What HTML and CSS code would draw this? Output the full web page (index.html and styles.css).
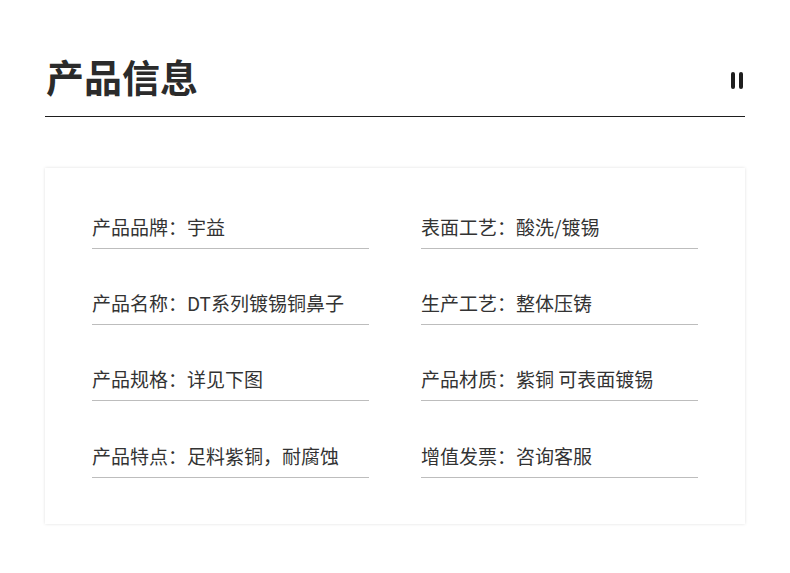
FILE: index.html
```html
<!DOCTYPE html>
<html lang="zh">
<head>
<meta charset="utf-8">
<link rel="stylesheet" href="styles.css">
</head>
<body>
<div class="page">
  <header class="head">
    <h1 class="title">产品信息</h1>
    <div class="bars"><span class="bar"></span><span class="bar"></span></div>
  </header>
  <section class="card">
    <div class="item">产品品牌：宇益</div>
    <div class="item">表面工艺：酸洗/镀锡</div>
    <div class="item">产品名称：DT系列镀锡铜鼻子</div>
    <div class="item">生产工艺：整体压铸</div>
    <div class="item">产品规格：详见下图</div>
    <div class="item">产品材质：紫铜 可表面镀锡</div>
    <div class="item">产品特点：足料紫铜，耐腐蚀</div>
    <div class="item">增值发票：咨询客服</div>
  </section>
</div>
</body>
</html>
```

FILE: styles.css
```css
html, body {
  margin: 0;
  padding: 0;
  background: #ffffff;
}
body {
  font-family: "Noto Sans CJK SC", "Noto Sans", sans-serif;
  color: #333333;
}
.page {
  width: 700px;
  margin-left: 45px;
  padding-top: 45px;
  padding-bottom: 49px;
}
.head {
  display: flex;
  align-items: center;
  justify-content: space-between;
  border-bottom: 1px solid #1e1e1e;
  height: 72px;
  box-sizing: border-box;
}
.title {
  margin: 0 0 0 1px;
  font-size: 38px;
  font-weight: 700;
  line-height: 58px;
  color: #2b2b2b;
  padding-bottom: 10px;
}
.bars {
  display: flex;
  gap: 4px;
  margin-right: 2px;
}
.bar {
  display: block;
  width: 4px;
  height: 17px;
  border-radius: 2px;
  background: #1e1e1e;
}
.card {
  margin-top: 51px;
  background: #ffffff;
  box-shadow: 0 0 3px rgba(0, 0, 0, 0.13);
  padding: 49px 47px 46px 47px;
  display: grid;
  grid-template-columns: 277px 277px;
  column-gap: 52px;
  row-gap: 44px;
}
.item {
  font-size: 19px;
  line-height: 19px;
  padding-bottom: 12px;
  border-bottom: 1px solid #bdbdbd;
  color: #333333;
  white-space: nowrap;
}
.item:nth-child(n+7) {
  margin-top: 1px;
}
```
